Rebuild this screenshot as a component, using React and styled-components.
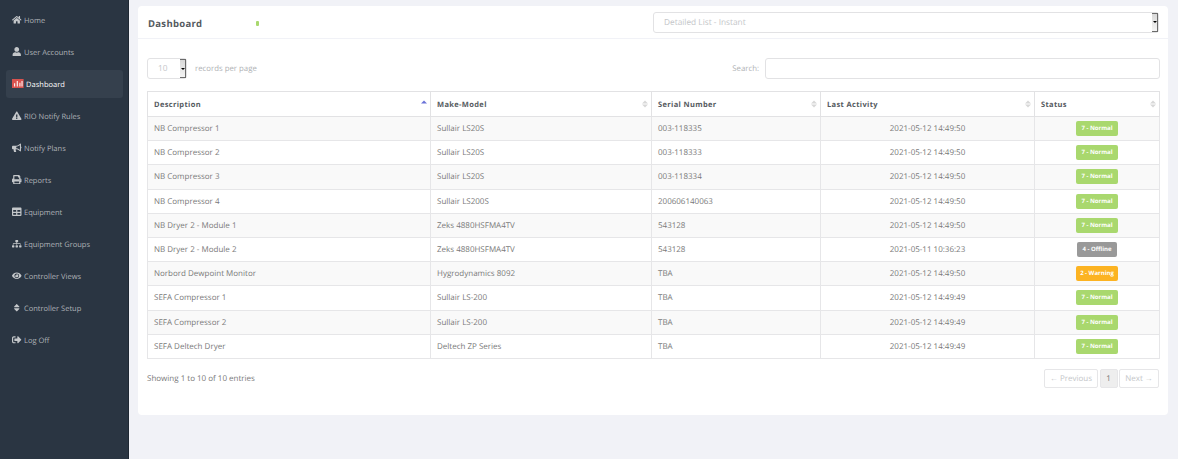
import React from "react";
import styled, { createGlobalStyle } from "styled-components";
import {
  FaHome, FaUser, FaExclamationTriangle, FaBullhorn, FaPrint,
  FaTable, FaSitemap, FaEye, FaSort, FaSignOutAlt,
} from "react-icons/fa";

const Global = createGlobalStyle`
  html, body { margin: 0; padding: 0; background: #f1f2f7; }
  body { font-family: "Open Sans", "Liberation Sans", sans-serif; text-rendering: geometricPrecision; }
  * { box-sizing: border-box; }
`;

const Shell = styled.div`
  display: flex;
  width: 1178px;
  height: 459px;
  overflow: hidden;
  background: #f1f2f7;
`;

const Sidebar = styled.nav`
  width: 129px;
  flex: none;
  display: flex;
  flex-direction: column;
  gap: 4px;
  padding: 6px 6px 0;
  background: #2a3542;
  border-right: 1px solid #1f2833;
`;

const NavItem = styled.a`
  display: flex;
  align-items: center;
  height: 28px;
  width: 117px;
  padding: 1px 0 0 6px;
  gap: 2.5px;
  border-radius: 3px;
  font-size: 7.5px;
  color: ${(p) => (p.$active ? "#ffffff" : "#aeb2b7")};
  background: ${(p) => (p.$active ? "#35404d" : "transparent")};
  svg { height: 9.5px; width: auto; flex: none; margin-top: -2px; color: #c4c7ca; }
`;

const Main = styled.main`
  flex: 1;
  min-width: 0;
  padding: 6px 10px 0 9px;
`;

const Card = styled.section`
  height: 409px;
  background: #ffffff;
  border-radius: 4px;
`;

const CardHeader = styled.header`
  display: flex;
  align-items: center;
  height: 33px;
  padding: 0 9px 0 10px;
  border-bottom: 1px solid #f1f2f7;
`;

const Title = styled.h1`
  width: 108px;
  margin: 3px 0 0;
  font-size: 9.5px;
  font-weight: 700;
  letter-spacing: 0.3px;
  color: #555a60;
`;

const Spark = styled.span`
  width: 3px;
  height: 5px;
  margin-top: 3px;
  background: #a9d86e;
  border-radius: 1px;
`;

const Select = styled.div`
  position: relative;
  display: flex;
  align-items: center;
  height: 21px;
  padding-left: 10px;
  flex: none;
  width: ${(p) => p.$w}px;
  margin-left: ${(p) => p.$ml || 0}px;
  font-size: 8.3px;
  color: #c4c6c9;
  background: #ffffff;
  border: 1px solid #e2e2e4;
  border-radius: 3px;
`;

const SelectButton = styled.span`
  position: absolute;
  top: 0;
  right: 0;
  bottom: 0;
  width: 6px;
  display: flex;
  align-items: center;
  justify-content: center;
  background: linear-gradient(#d8d8d8, #f4f4f4);
  border: 1px solid #6b6b6b;
  border-left: 0;
  &::after {
    content: "";
    border-left: 2px solid transparent;
    border-right: 2px solid transparent;
    border-top: 2px solid #000;
  }
`;

const CardBody = styled.div`
  padding: 19px 8px 0 9px;
`;

const Toolbar = styled.div`
  display: flex;
  align-items: center;
  justify-content: space-between;
  height: 21px;
`;

const Group = styled.div`
  display: flex;
  align-items: center;
  gap: ${(p) => p.$gap}px;
  font-size: 7.8px;
  color: #b0b2b5;
`;

const SearchInput = styled.div`
  width: 395px;
  height: 21px;
  background: #fff;
  border: 1px solid #e2e2e4;
  border-radius: 3px;
`;

const Table = styled.table`
  width: 1012px;
  margin-top: 12px;
  border-collapse: collapse;
  table-layout: fixed;
  font-size: 8px;
  color: #797979;
`;

const Th = styled.th`
  position: relative;
  height: 25px;
  padding: 1px 6px 0;
  text-align: left;
  font-size: 7.5px;
  font-weight: 700;
  letter-spacing: 0.35px;
  color: #555a60;
  border: 1px solid #e2e2e4;
`;

const SortMark = styled.span`
  position: absolute;
  top: 50%;
  right: 3px;
  transform: translateY(-50%);
  display: flex;
  flex-direction: column;
  gap: 1px;
  &::before, &::after {
    content: "";
    border-left: 3px solid transparent;
    border-right: 3px solid transparent;
  }
  &::before { border-bottom: 3px solid ${(p) => (p.$asc ? "#6a72d8" : "#d8d8d8")}; }
  &::after { border-top: 3px solid ${(p) => (p.$asc ? "transparent" : "#d8d8d8")}; }
`;

const Tr = styled.tr`
  background: ${(p) => (p.$odd ? "#f9f9f9" : "#ffffff")};
`;

const Td = styled.td`
  height: 24.2px;
  padding: 0 6px;
  text-align: ${(p) => (p.$center ? "center" : "left")};
  border: 1px solid #e6e6e8;
`;

const Badge = styled.span`
  display: inline-block;
  height: 15px;
  padding: 0 ${(p) => p.$pad}px;
  line-height: 15px;
  vertical-align: middle;
  font-size: 6px;
  font-weight: 700;
  color: #fff;
  background: ${(p) => p.$color};
  border-radius: 2px;
`;

const Footer = styled.div`
  display: flex;
  align-items: center;
  justify-content: space-between;
  margin-top: 10px;
  padding-right: 1px;
  height: 20px;
  font-size: 8px;
  color: #797979;
`;

const Pager = styled.div`
  display: flex;
  gap: 1.5px;
`;

const PageButton = styled.span`
  display: flex;
  align-items: center;
  justify-content: center;
  height: 19px;
  width: ${(p) => p.$w}px;
  font-size: 8px;
  color: ${(p) => (p.$on ? "#777" : "#c4c6c9")};
  background: ${(p) => (p.$on ? "#eeeeee" : "#fff")};
  border: 1px solid #e6e6e8;
  border-radius: 2px;
`;

const DashIcon = () => (
  <svg viewBox="0 0 11 9">
    <rect width="11" height="9" fill="#d9534f" />
    <path d="M2 7V4h1v3zM4.5 7V2h1v5zM7 7V3.5h1V7zM9 7V2h1v5z" fill="#fff" />
  </svg>
);

const nav = [
  [FaHome, "Home"], [FaUser, "User Accounts"], [DashIcon, "Dashboard", true],
  [FaExclamationTriangle, "RIO Notify Rules"], [FaBullhorn, "Notify Plans"], [FaPrint, "Reports"],
  [FaTable, "Equipment"], [FaSitemap, "Equipment Groups"], [FaEye, "Controller Views"],
  [FaSort, "Controller Setup"], [FaSignOutAlt, "Log Off"],
];

const columns = [
  ["Description", 283], ["Make-Model", 221], ["Serial Number", 169], ["Last Activity", 214], ["Status", 125],
];

const N = ["7 - Normal", "#a9d86e", 5];
const rows = [
  ["NB Compressor 1", "Sullair LS20S", "003-118335", "2021-05-12 14:49:50", N],
  ["NB Compressor 2", "Sullair LS20S", "003-118333", "2021-05-12 14:49:50", N],
  ["NB Compressor 3", "Sullair LS20S", "003-118334", "2021-05-12 14:49:50", N],
  ["NB Compressor 4", "Sullair LS200S", "200606140063", "2021-05-12 14:49:50", N],
  ["NB Dryer 2 - Module 1", "Zeks 4880HSFMA4TV", "543128", "2021-05-12 14:49:50", N],
  ["NB Dryer 2 - Module 2", "Zeks 4880HSFMA4TV", "543128", "2021-05-11 10:36:23", ["4 - Offline", "#999999", 5]],
  ["Norbord Dewpoint Monitor", "Hygrodynamics 8092", "TBA", "2021-05-12 14:49:50", ["2 - Warning", "#fcb322", 4.5]],
  ["SEFA Compressor 1", "Sullair LS-200", "TBA", "2021-05-12 14:49:49", N],
  ["SEFA Compressor 2", "Sullair LS-200", "TBA", "2021-05-12 14:49:49", N],
  ["SEFA Deltech Dryer", "Deltech ZP Series", "TBA", "2021-05-12 14:49:49", N],
];

export default function App() {
  return (
    <Shell>
      <Global />
      <Sidebar>
        {nav.map(([Icon, label, active]) => (
          <NavItem key={label} $active={active}>
            <Icon />
            {label}
          </NavItem>
        ))}
      </Sidebar>
      <Main>
        <Card>
          <CardHeader>
            <Title>Dashboard</Title>
            <Spark />
            <Select $w={506} $ml={394}>
              Detailed List - Instant
              <SelectButton />
            </Select>
          </CardHeader>
          <CardBody>
            <Toolbar>
              <Group $gap={8}>
                <Select $w={40}>
                  10
                  <SelectButton />
                </Select>
                records per page
              </Group>
              <Group $gap={6}>
                Search:
                <SearchInput />
              </Group>
            </Toolbar>
            <Table>
              <colgroup>
                {columns.map(([name, w]) => (
                  <col key={name} width={w} />
                ))}
              </colgroup>
              <thead>
                <tr>
                  {columns.map(([name], i) => (
                    <Th key={name}>
                      {name}
                      <SortMark $asc={i === 0} />
                    </Th>
                  ))}
                </tr>
              </thead>
              <tbody>
                {rows.map((r, i) => (
                  <Tr key={r[0]} $odd={i % 2 === 0}>
                    <Td>{r[0]}</Td>
                    <Td>{r[1]}</Td>
                    <Td>{r[2]}</Td>
                    <Td $center>{r[3]}</Td>
                    <Td $center>
                      <Badge $color={r[4][1]} $pad={r[4][2]}>{r[4][0]}</Badge>
                    </Td>
                  </Tr>
                ))}
              </tbody>
            </Table>
            <Footer>
              Showing 1 to 10 of 10 entries
              <Pager>
                <PageButton $w={54}>← Previous</PageButton>
                <PageButton $w={18} $on>1</PageButton>
                <PageButton $w={40}>Next →</PageButton>
              </Pager>
            </Footer>
          </CardBody>
        </Card>
      </Main>
    </Shell>
  );
}
